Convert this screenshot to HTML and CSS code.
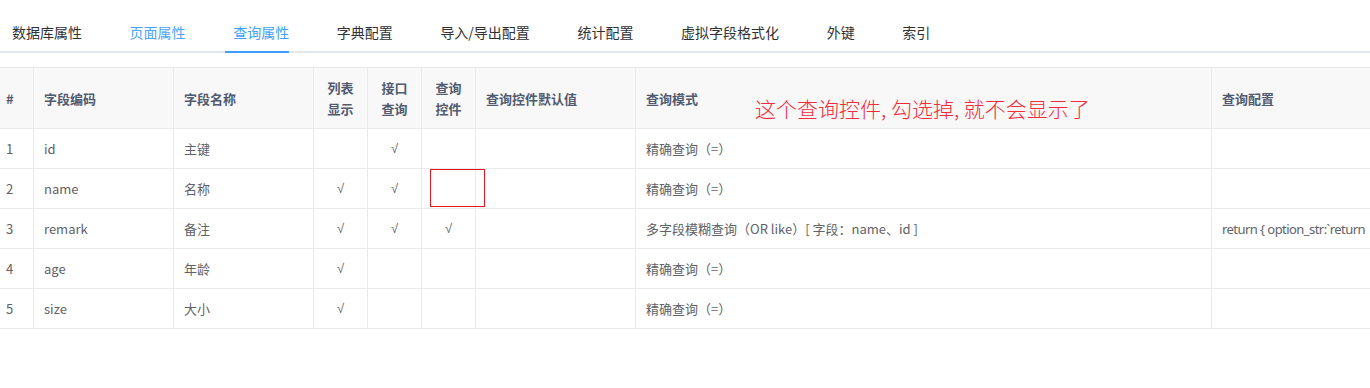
FILE: index.html
```html
<!DOCTYPE html>
<html lang="zh-CN">
<head>
<meta charset="utf-8">
<title>查询属性</title>
<link rel="stylesheet" href="styles.css">
</head>
<body>
<div class="page">
  <nav class="tabs">
    <div class="tab">数据库属性</div>
    <div class="tab hover">页面属性</div>
    <div class="tab active">查询属性<span class="bar"></span></div>
    <div class="tab">字典配置</div>
    <div class="tab">导入/导出配置</div>
    <div class="tab">统计配置</div>
    <div class="tab">虚拟字段格式化</div>
    <div class="tab">外键</div>
    <div class="tab">索引</div>
  </nav>

  <div class="table-wrap">
    <table class="grid">
      <colgroup>
        <col class="c-idx">
        <col class="c-code">
        <col class="c-name">
        <col class="c-flag">
        <col class="c-flag">
        <col class="c-flag">
        <col class="c-def">
        <col class="c-mode">
        <col class="c-conf">
      </colgroup>
      <thead>
        <tr>
          <th class="idx">#</th>
          <th>字段编码</th>
          <th>字段名称</th>
          <th class="center">列表<br>显示</th>
          <th class="center">接口<br>查询</th>
          <th class="center">查询<br>控件</th>
          <th>查询控件默认值</th>
          <th>查询模式</th>
          <th>查询配置</th>
        </tr>
      </thead>
      <tbody>
        <tr>
          <td class="idx">1</td><td>id</td><td>主键</td>
          <td class="center check"></td><td class="center check">√</td><td class="center check"></td>
          <td></td><td>精确查询（=）</td><td></td>
        </tr>
        <tr>
          <td class="idx">2</td><td>name</td><td>名称</td>
          <td class="center check">√</td><td class="center check">√</td><td class="center check marked"><span class="mark-box"></span></td>
          <td></td><td>精确查询（=）</td><td></td>
        </tr>
        <tr>
          <td class="idx">3</td><td>remark</td><td>备注</td>
          <td class="center check">√</td><td class="center check">√</td><td class="center check">√</td>
          <td></td><td>多字段模糊查询（OR like）[ 字段：name、id ]</td><td class="code">return { option_str:`return</td>
        </tr>
        <tr>
          <td class="idx">4</td><td>age</td><td>年龄</td>
          <td class="center check">√</td><td class="center check"></td><td class="center check"></td>
          <td></td><td>精确查询（=）</td><td></td>
        </tr>
        <tr>
          <td class="idx">5</td><td>size</td><td>大小</td>
          <td class="center check">√</td><td class="center check"></td><td class="center check"></td>
          <td></td><td>精确查询（=）</td><td></td>
        </tr>
      </tbody>
    </table>
    <div class="note">这个查询控件, 勾选掉, 就不会显示了</div>
  </div>
</div>
</body>
</html>
```

FILE: styles.css
```css
html, body {
  margin: 0;
  padding: 0;
  background: #ffffff;
  overflow: hidden;
}

body {
  font-family: "Noto Sans CJK SC", sans-serif;
  color: #606266;
}

.page {
  width: 1370px;
  height: 388px;
  overflow: hidden;
}

/* ---------- tabs ---------- */
.tabs {
  display: flex;
  gap: 47.6px;
  padding: 14px 0 0 12px;
  border-bottom: 2px solid #e4e7ed;
  font-size: 14px;
}

.tab {
  position: relative;
  height: 37px;
  line-height: 37px;
  color: #303133;
  white-space: nowrap;
}

.tab.hover {
  color: #4ba3ff;
}

.tab.active {
  color: #409eff;
}

.tab .bar {
  position: absolute;
  left: -8px;
  right: 0;
  bottom: -2px;
  height: 2px;
  background: #409eff;
}

/* ---------- table ---------- */
.table-wrap {
  position: relative;
  margin-top: 14px;
  overflow: hidden;
}

.grid {
  table-layout: fixed;
  border-collapse: separate;
  border-spacing: 0;
  width: 1612px;
  border-top: 1px solid #e8eaec;
  font-size: 13px;
}

.c-idx  { width: 34px; }
.c-code { width: 140px; }
.c-name { width: 140px; }
.c-flag { width: 54px; }
.c-def  { width: 160px; }
.c-mode { width: 576px; }
.c-conf { width: 400px; }

.grid th,
.grid td {
  border-right: 1px solid #e8eaec;
  border-bottom: 1px solid #e8eaec;
  padding: 0 10px;
  text-align: left;
  white-space: nowrap;
  overflow: hidden;
  vertical-align: middle;
}

.grid th {
  height: 60px;
  background: #f8f8f9;
  color: #515a6e;
  font-weight: 700;
  line-height: 21px;
}

.grid td {
  height: 39px;
  color: #606266;
}

.grid .idx {
  padding-left: 6px;
  padding-right: 0;
}

.grid .center {
  text-align: center;
  padding: 0;
}

.grid td.check {
  font-family: "Liberation Sans", sans-serif;
  font-size: 13px;
}

.grid td.code {
  font-family: "Noto Sans", sans-serif;
  letter-spacing: -0.55px;
}

.grid td.marked {
  position: relative;
  overflow: visible;
}

.mark-box {
  position: absolute;
  left: 8px;
  top: 0;
  width: 53px;
  height: 36px;
  border: 1px solid #e5161e;
}

.note {
  position: absolute;
  left: 755px;
  top: 28px;
  font-weight: 300;
  font-size: 21px;
  line-height: 26px;
  color: #f52a3a;
  white-space: nowrap;
}
```
